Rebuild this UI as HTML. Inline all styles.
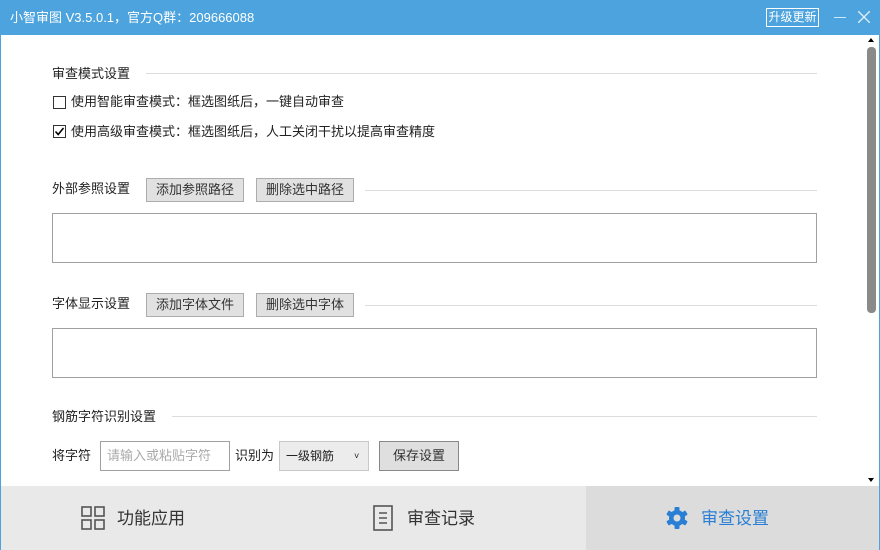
<!DOCTYPE html>
<html><head><meta charset="utf-8"><style>
*{margin:0;padding:0;box-sizing:border-box}
body{width:880px;height:550px;overflow:hidden;background:#fff;font-family:"Liberation Sans","Noto Sans CJK SC",sans-serif;font-size:13px;line-height:16px;color:#222;position:relative}
.a{position:absolute;white-space:nowrap}
.title{left:0;top:0;width:880px;height:35px;background:#4ca3dd;color:#fff;font-size:13px;line-height:35px;padding-left:10px}
.hr{position:absolute;height:1px;background:#dcdcdc}
.btn{position:absolute;background:#e1e1e1;border:1px solid #adadad;color:#333;text-align:center;line-height:22px;font-size:13px}
.box{position:absolute;border:1px solid #a0a0a0;background:#fff}
.cb{position:absolute;width:13px;height:13px;border:1px solid #333;background:#fff}
</style></head><body>
<div class="a title">小智审图 V3.5.0.1，官方Q群：209666088</div>
<div class="a" style="left:766px;top:8px;width:53px;height:19px;border:1px solid #fff;color:#fff;font-size:12px;line-height:17px;text-align:center">升级更新</div>
<div class="a" style="left:834px;top:17px;width:12px;height:1px;background:#cfe6f6"></div>
<svg class="a" style="left:858px;top:11px" width="12" height="12" viewBox="0 0 12 12" stroke="#dbeefa" stroke-width="1.4"><path d="M0 0L12 12M12 0L0 12"/></svg>
<div class="a" style="left:0;top:35px;width:1px;height:515px;background:#4ca3dd"></div>
<div class="a" style="left:879px;top:35px;width:1px;height:515px;background:#4ca3dd"></div>
<div class="a" style="left:868px;top:38px;width:0;height:0;border-left:3px solid transparent;border-right:3px solid transparent;border-bottom:4px solid #000"></div>
<div class="a" style="left:867px;top:47px;width:9px;height:266px;background:#8a8a8a;border-radius:4px"></div>
<div class="a" style="left:868px;top:478px;width:0;height:0;border-left:3px solid transparent;border-right:3px solid transparent;border-top:4px solid #000"></div>

<div class="a" style="left:52px;top:66px">审查模式设置</div>
<div class="hr" style="left:146px;top:73px;width:671px"></div>
<div class="cb" style="left:53px;top:96px"></div>
<div class="a" style="left:71px;top:94px">使用智能审查模式：框选图纸后，一键自动审查</div>
<div class="cb" style="left:53px;top:125px"></div>
<svg class="a" style="left:55px;top:127px" width="9" height="9" viewBox="0 0 9 9" fill="none" stroke="#000" stroke-width="1.6"><path d="M0.5 4.5L3.2 7.5L8.5 1"/></svg>
<div class="a" style="left:71px;top:124px">使用高级审查模式：框选图纸后，人工关闭干扰以提高审查精度</div>

<div class="a" style="left:52px;top:181px">外部参照设置</div>
<div class="btn" style="left:146px;top:178px;width:98px;height:24px">添加参照路径</div>
<div class="btn" style="left:256px;top:178px;width:98px;height:24px">删除选中路径</div>
<div class="hr" style="left:365px;top:190px;width:452px"></div>
<div class="box" style="left:52px;top:213px;width:765px;height:50px"></div>

<div class="a" style="left:52px;top:296px">字体显示设置</div>
<div class="btn" style="left:146px;top:293px;width:98px;height:24px">添加字体文件</div>
<div class="btn" style="left:256px;top:293px;width:98px;height:24px">删除选中字体</div>
<div class="hr" style="left:365px;top:305px;width:452px"></div>
<div class="box" style="left:52px;top:328px;width:765px;height:50px"></div>

<div class="a" style="left:52px;top:409px">钢筋字符识别设置</div>
<div class="hr" style="left:172px;top:416px;width:645px"></div>
<div class="a" style="left:52px;top:448px">将字符</div>
<div class="box" style="left:100px;top:441px;width:130px;height:30px;color:#aaa;line-height:28px;padding-left:6px;font-size:13px">请输入或粘贴字符</div>
<div class="a" style="left:235px;top:448px">识别为</div>
<div class="a" style="left:279px;top:441px;width:90px;height:30px;background:#ececec;border:1px solid #c8c8c8;line-height:28px;padding-left:6px;font-size:12px">一级钢筋<span style="position:absolute;left:74px;font-size:9px">˅</span></div>
<div class="btn" style="left:379px;top:441px;width:80px;height:30px;line-height:28px;background:#dfdfdf;border-color:#888">保存设置</div>

<div class="a" style="left:1px;top:486px;width:878px;height:64px;background:#e9e9e9"></div>
<div class="a" style="left:586px;top:486px;width:293px;height:64px;background:#dcdcdc"></div>
<svg class="a" style="left:81px;top:506px" width="24" height="24" viewBox="0 0 24 24" fill="none" stroke="#555" stroke-width="1.6"><rect x="1" y="1" width="9" height="9"/><rect x="14" y="1" width="9" height="9"/><rect x="1" y="14" width="9" height="9"/><rect x="14" y="14" width="9" height="9"/></svg>
<div class="a" style="left:117px;top:509px;font-size:17px;line-height:20px;color:#333">功能应用</div>
<svg class="a" style="left:373px;top:505px" width="20" height="26" viewBox="0 0 20 26" fill="none" stroke="#555" stroke-width="1.6"><rect x="1" y="1" width="18" height="24"/><path d="M6 8h8M6 13h8M6 18h8"/></svg>
<div class="a" style="left:407px;top:509px;font-size:17px;line-height:20px;color:#333">审查记录</div>
<svg class="a" style="left:665px;top:506px" width="24" height="24" viewBox="0 0 24 24"><g fill="#2a7fd4"><circle cx="12" cy="12" r="8"/><rect x="9.5" y="1" width="5" height="22" rx="1"/><rect x="9.5" y="1" width="5" height="22" rx="1" transform="rotate(60 12 12)"/><rect x="9.5" y="1" width="5" height="22" rx="1" transform="rotate(120 12 12)"/></g><circle cx="12" cy="12" r="3.5" fill="#dcdcdc"/></svg>
<div class="a" style="left:701px;top:509px;font-size:17px;line-height:20px;color:#2a7fd4">审查设置</div>
</body></html>
